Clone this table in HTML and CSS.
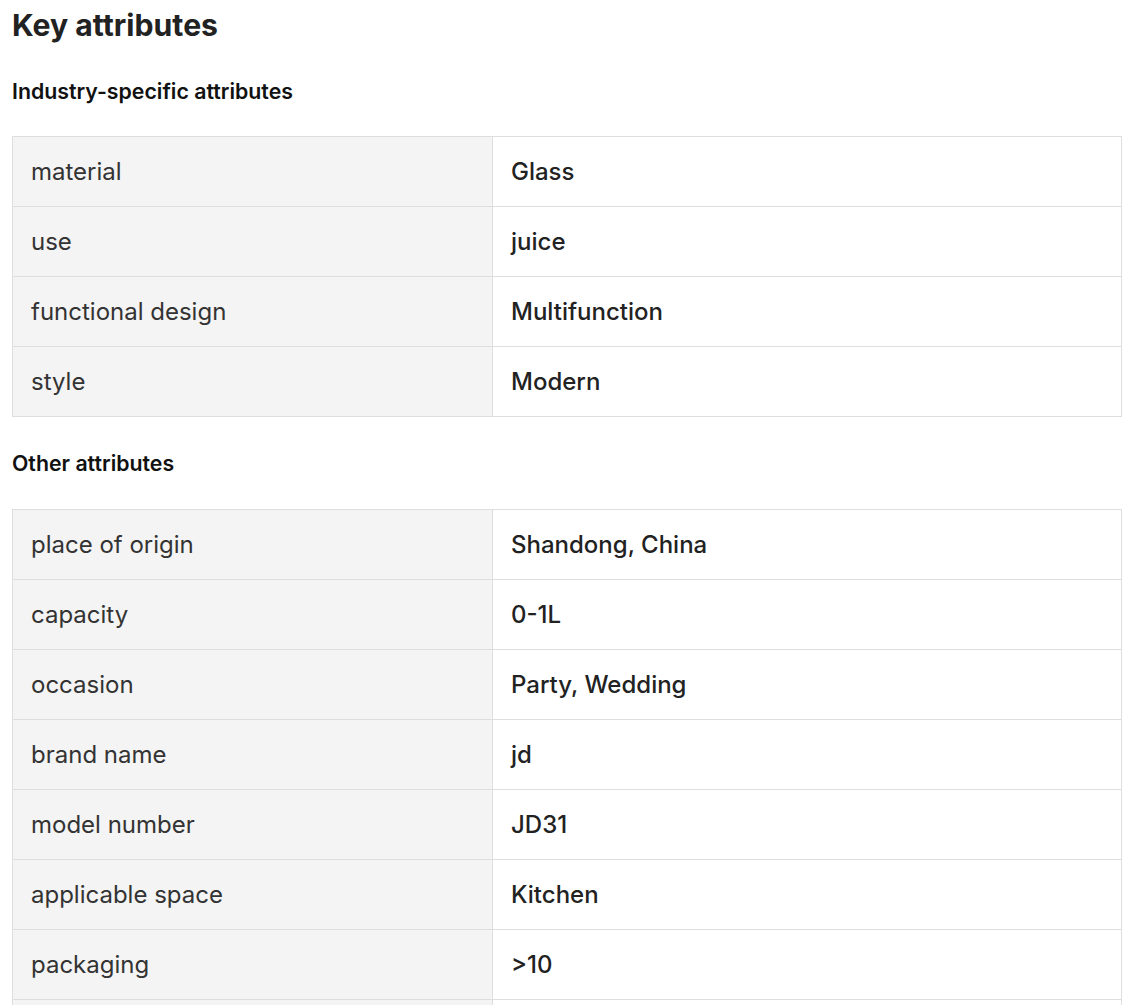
FILE: index.html
```
<!DOCTYPE html>
<html>
<head>
<meta charset="utf-8">
<link rel="stylesheet" href="styles.css">
</head>
<body>
<div class="page">
  <h2 class="title">Key attributes</h2>
  <h3 class="subtitle">Industry-specific attributes</h3>
  <table class="attrs">
    <tr><td class="k">material</td><td class="v">Glass</td></tr>
    <tr><td class="k">use</td><td class="v">juice</td></tr>
    <tr><td class="k">functional design</td><td class="v">Multifunction</td></tr>
    <tr><td class="k">style</td><td class="v">Modern</td></tr>
  </table>
  <h3 class="subtitle second">Other attributes</h3>
  <table class="attrs">
    <tr><td class="k">place of origin</td><td class="v">Shandong, China</td></tr>
    <tr><td class="k">capacity</td><td class="v">0-1L</td></tr>
    <tr><td class="k">occasion</td><td class="v">Party, Wedding</td></tr>
    <tr><td class="k">brand name</td><td class="v">jd</td></tr>
    <tr><td class="k">model number</td><td class="v">JD31</td></tr>
    <tr><td class="k">applicable space</td><td class="v">Kitchen</td></tr>
    <tr><td class="k">packaging</td><td class="v">&gt;10</td></tr>
    <tr><td class="k"></td><td class="v"></td></tr>
  </table>
</div>
</body>
</html>
```
FILE: styles.css
```
html, body {
  margin: 0;
  padding: 0;
  background: #fff;
}
body {
  font-family: Inter, "Noto Sans", sans-serif;
  color: #222;
}
.page {
  padding: 0 19px 0 12px;
}
.title {
  font-size: 30.2px;
  line-height: 36px;
  font-weight: 700;
  margin: 7px 0 0;
  color: #222;
}
.subtitle {
  font-size: 21.3px;
  line-height: 26px;
  font-weight: 600;
  margin: 35px 0 32px;
  color: #111;
}
.subtitle.second {
  margin-top: 33px;
  margin-bottom: 33px;
}
.attrs {
  width: 100%;
  border-collapse: collapse;
  table-layout: fixed;
}
.attrs td {
  border: 1px solid #dedede;
  height: 70px;
  padding: 0 18px;
  font-size: 24px;
  line-height: 28px;
  vertical-align: middle;
  box-sizing: border-box;
}
.attrs td.k {
  width: 480px;
  background: #f4f4f4;
  font-weight: 400;
  color: #333;
}
.attrs td.v {
  font-weight: 500;
  color: #222;
}
```
